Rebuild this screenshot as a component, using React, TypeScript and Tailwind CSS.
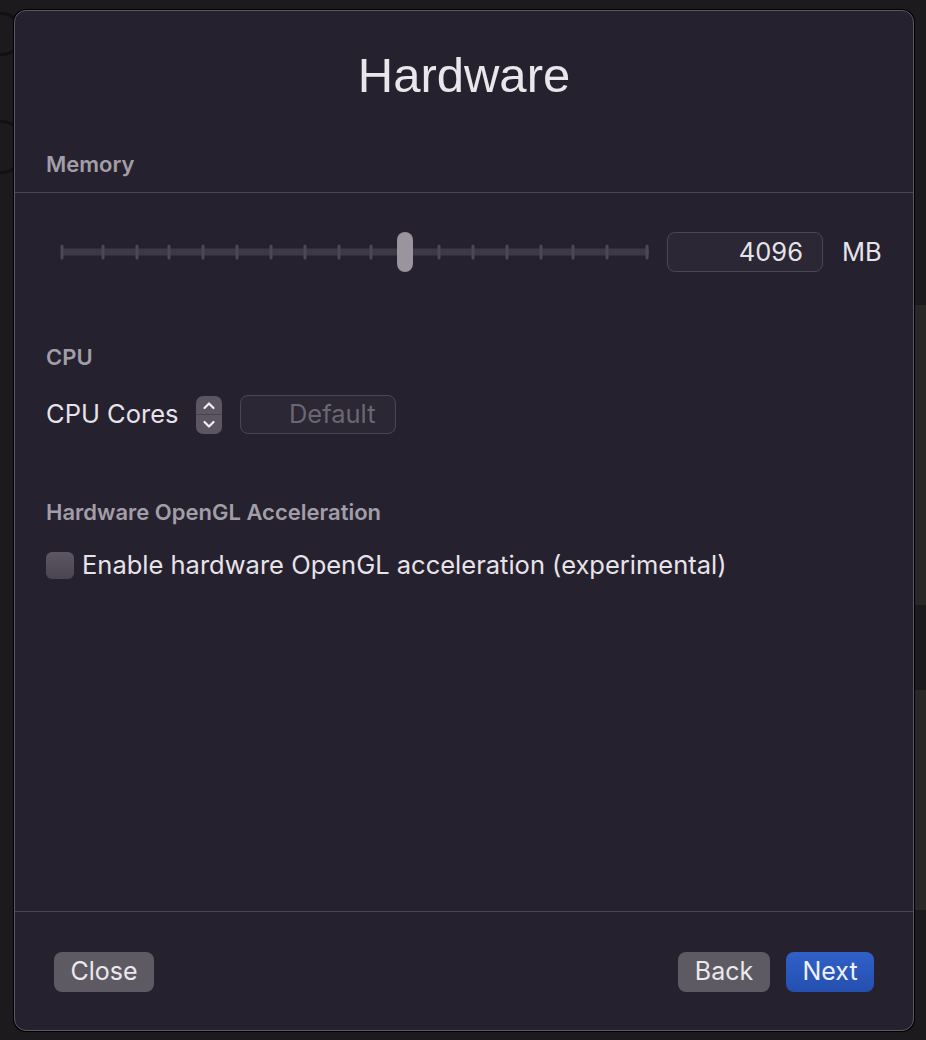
import React from "react";

const ticks = [1, 42, 76, 108, 142, 176, 210, 244, 278, 310, 378, 412, 446, 480, 512, 546, 586];

function Slider() {
  return (
    <svg width="606" height="40" viewBox="0 0 606 40" className="block">
      <rect x="15" y="16.5" width="588" height="7" rx="1.5" fill="#3e3947" />
      {ticks.map((t) => (
        <rect key={t} x={15 + t - 1.5} y="12.5" width="3" height="15" rx="1.5" fill="#4d4856" />
      ))}
      <rect x="351" y="0" width="16" height="40" rx="8" fill="#99949e" />
    </svg>
  );
}

function Stepper() {
  return (
    <div className="w-[26px] h-[38px] rounded-[7px] bg-[#5b5661] flex flex-col items-center justify-between relative">
      <svg width="26" height="19" viewBox="0 0 26 19">
        <path d="M8.5 12 L13 7.5 L17.5 12" stroke="#f1eff3" strokeWidth="2.2" fill="none" strokeLinecap="round" strokeLinejoin="round" />
      </svg>
      <div className="absolute left-0 right-0 top-[18.5px] h-px bg-[#48434e]" />
      <svg width="26" height="19" viewBox="0 0 26 19">
        <path d="M8.5 7 L13 11.5 L17.5 7" stroke="#f1eff3" strokeWidth="2.2" fill="none" strokeLinecap="round" strokeLinejoin="round" />
      </svg>
    </div>
  );
}

export default function App() {
  const body = { fontFamily: "Inter, 'Noto Sans', sans-serif" };
  return (
    <div className="relative w-[926px] h-[1040px] bg-[#1c1a1d] overflow-hidden" style={body}>
      {/* underlying window bits */}
      <div className="absolute left-[914px] top-[305px] w-[12px] h-[300px] bg-[#2a2729]" />
      <div className="absolute left-[914px] top-[690px] w-[12px] h-[220px] bg-[#2a2729]" />
      <div className="absolute left-[-18px] top-[12px] w-[40px] h-[44px] rounded-full border-[3px] border-[#111012]" />
      <div className="absolute left-[-18px] top-[120px] w-[40px] h-[54px] rounded-full border-[3px] border-[#111012]" />

      <div className="relative pl-[14px] pt-[10px]">
        <div className="w-[900px] h-[1021px] rounded-[12px] border border-[#5d5964] bg-[#26212e] shadow-[0_0_0_1px_#000] flex flex-col text-[#e6e3e9]">
          <h1
            className="text-center text-[49px] leading-[56px] mt-[36px] text-[#e9e7eb]"
            style={{ fontFamily: "'Liberation Sans', Arial, sans-serif" }}
          >
            Hardware
          </h1>

          <div className="mt-[48px] px-[31px] text-[22px] leading-[26px] font-semibold text-[#a29ea7]">Memory</div>
          <div className="mt-[15px] h-px bg-[#49454f]" />

          <div className="mt-[39px] h-[40px] flex items-center pl-[31px]">
            <Slider />
            <div className="ml-[15px] w-[156px] h-[40px] rounded-[8px] border border-[#4b4752] bg-[#2b2734] flex items-center justify-end pr-[19px] text-[25.5px]">
              4096
            </div>
            <div className="ml-[19px] text-[25.5px]">MB</div>
          </div>

          <div className="mt-[72px] px-[31px] text-[22px] leading-[26px] font-semibold text-[#a29ea7]">CPU</div>
          <div className="mt-[25px] h-[39px] flex items-center pl-[31px]">
            <span className="text-[25.5px]">CPU Cores</span>
            <div className="ml-[18px]">
              <Stepper />
            </div>
            <div className="ml-[18px] w-[156px] h-[39px] rounded-[8px] border border-[#4b4752] bg-[#2b2734] flex items-center justify-end pr-[20px] text-[25.5px] text-[#6b6671]">
              Default
            </div>
          </div>

          <div className="mt-[65px] px-[31px] text-[22px] leading-[26px] font-semibold text-[#a29ea7]">
            Hardware OpenGL Acceleration
          </div>
          <div className="mt-[27px] h-[27px] flex items-center pl-[31px]">
            <div className="w-[28px] h-[27px] rounded-[6px] bg-gradient-to-b from-[#5c5763] to-[#4a4551]" />
            <span className="ml-[8px] text-[25.5px]">Enable hardware OpenGL acceleration (experimental)</span>
          </div>

          <div className="mt-auto h-px bg-[#49454f]" />
          <div className="pt-[40px] pb-[38px] px-[39px] flex items-center">
            <button className="w-[100px] h-[40px] rounded-[8px] bg-[#5e5a63] text-[25px] text-[#ebe9ed]">Close</button>
            <div className="flex-1" />
            <button className="w-[92px] h-[40px] rounded-[8px] bg-[#5e5a63] text-[25px] text-[#ebe9ed]">Back</button>
            <button className="ml-[16px] w-[88px] h-[40px] rounded-[8px] bg-gradient-to-b from-[#3061c9] to-[#244fae] text-[25px] text-[#eef1fa]">
              Next
            </button>
          </div>
        </div>
      </div>
    </div>
  );
}
